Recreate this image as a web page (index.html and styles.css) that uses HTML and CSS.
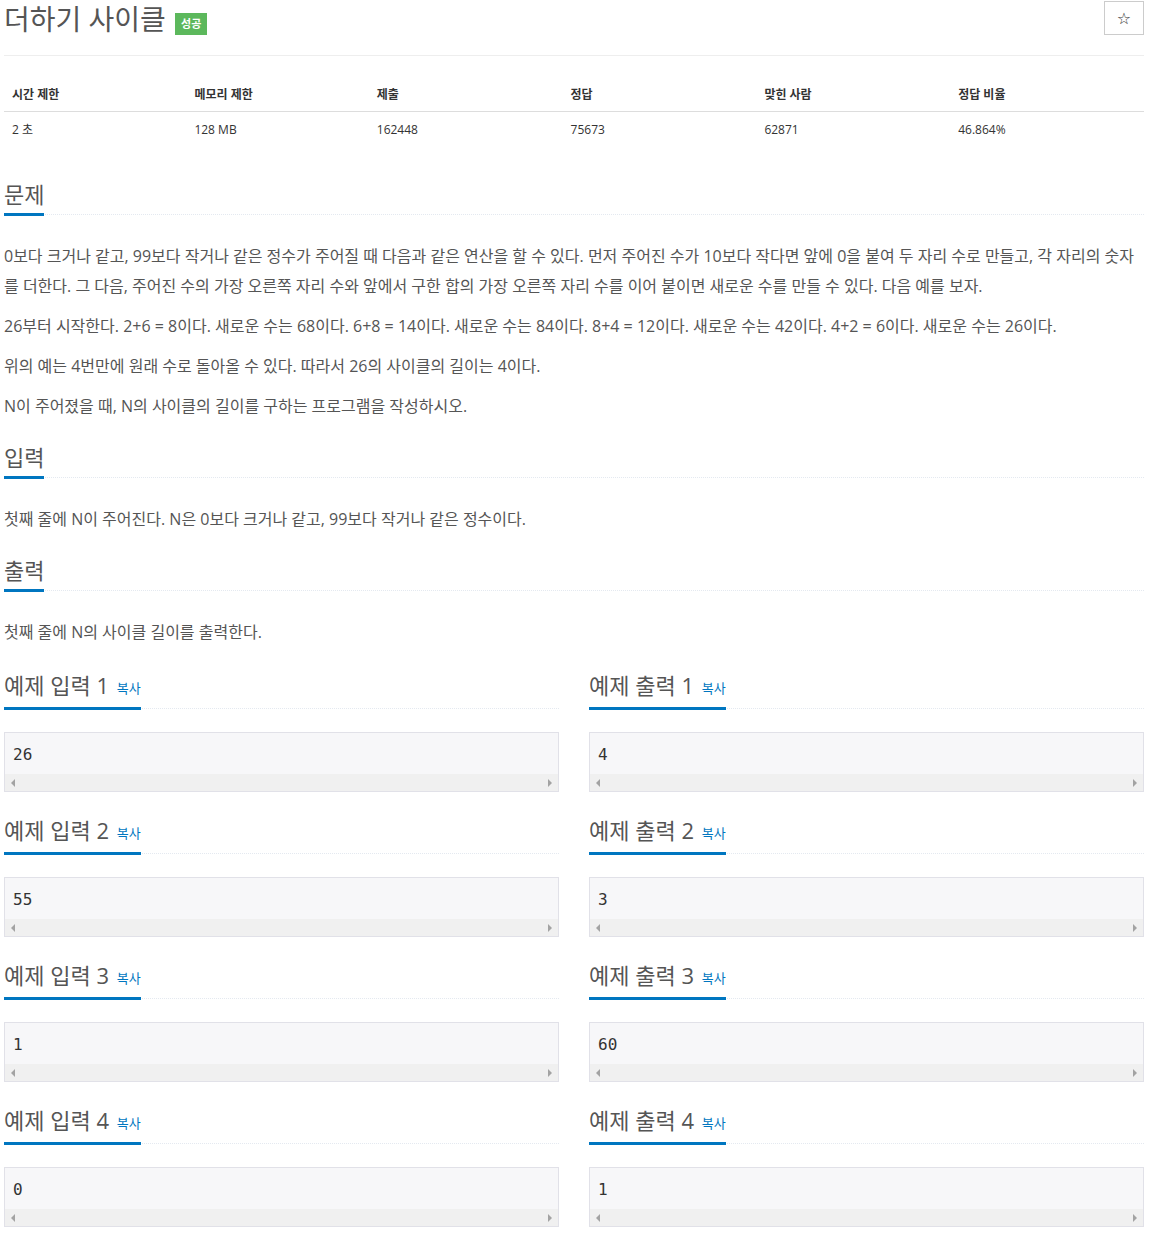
FILE: index.html
```html
<!DOCTYPE html>
<html lang="ko">
<head>
    <meta charset="UTF-8">
    <title>더하기 사이클</title>
    <link rel="stylesheet" href="styles.css">
</head>
<body>
    <div class="container">
        <div class="page-header">
            <h1 class="problem-title">더하기 사이클 <span class="label-success">성공</span></h1>
            <button type="button" class="star-btn">☆</button>
        </div>

        <table class="problem-info">
            <thead>
                <tr>
                    <th style="width: 16%">시간 제한</th>
                    <th style="width: 16%">메모리 제한</th>
                    <th style="width: 17%">제출</th>
                    <th style="width: 17%">정답</th>
                    <th style="width: 17%">맞힌 사람</th>
                    <th style="width: 17%">정답 비율</th>
                </tr>
            </thead>
            <tbody>
                <tr>
                    <td>2 초</td>
                    <td>128 MB</td>
                    <td>162448</td>
                    <td>75673</td>
                    <td>62871</td>
                    <td>46.864%</td>
                </tr>
            </tbody>
        </table>

        <section class="problem-section">
            <div class="headline"><h2>문제</h2></div>
            <div class="problem-text">
                <p>0보다 크거나 같고, 99보다 작거나 같은 정수가 주어질 때 다음과 같은 연산을 할 수 있다. 먼저 주어진 수가 10보다 작다면 앞에 0을 붙여 두 자리 수로 만들고, 각 자리의 숫자를 더한다. 그 다음, 주어진 수의 가장 오른쪽 자리 수와 앞에서 구한 합의 가장 오른쪽 자리 수를 이어 붙이면 새로운 수를 만들 수 있다. 다음 예를 보자.</p>
                <p>26부터 시작한다. 2+6 = 8이다. 새로운 수는 68이다. 6+8 = 14이다. 새로운 수는 84이다. 8+4 = 12이다. 새로운 수는 42이다. 4+2 = 6이다. 새로운 수는 26이다.</p>
                <p>위의 예는 4번만에 원래 수로 돌아올 수 있다. 따라서 26의 사이클의 길이는 4이다.</p>
                <p>N이 주어졌을 때, N의 사이클의 길이를 구하는 프로그램을 작성하시오.</p>
            </div>
        </section>

        <section class="problem-section">
            <div class="headline"><h2>입력</h2></div>
            <div class="problem-text">
                <p>첫째 줄에 N이 주어진다. N은 0보다 크거나 같고, 99보다 작거나 같은 정수이다.</p>
            </div>
        </section>

        <section class="problem-section">
            <div class="headline"><h2>출력</h2></div>
            <div class="problem-text">
                <p>첫째 줄에 N의 사이클 길이를 출력한다.</p>
            </div>
        </section>

        <div class="samples">
            <div class="sample">
                <div class="headline"><h2>예제 입력 1 <a class="copy-btn">복사</a></h2></div>
                <div class="sample-box"><pre>26</pre><div class="scrollbar"><span class="arrow-left"></span><span class="arrow-right"></span></div></div>
            </div>
            <div class="sample">
                <div class="headline"><h2>예제 출력 1 <a class="copy-btn">복사</a></h2></div>
                <div class="sample-box"><pre>4</pre><div class="scrollbar"><span class="arrow-left"></span><span class="arrow-right"></span></div></div>
            </div>
            <div class="sample">
                <div class="headline"><h2>예제 입력 2 <a class="copy-btn">복사</a></h2></div>
                <div class="sample-box"><pre>55</pre><div class="scrollbar"><span class="arrow-left"></span><span class="arrow-right"></span></div></div>
            </div>
            <div class="sample">
                <div class="headline"><h2>예제 출력 2 <a class="copy-btn">복사</a></h2></div>
                <div class="sample-box"><pre>3</pre><div class="scrollbar"><span class="arrow-left"></span><span class="arrow-right"></span></div></div>
            </div>
            <div class="sample">
                <div class="headline"><h2>예제 입력 3 <a class="copy-btn">복사</a></h2></div>
                <div class="sample-box"><pre>1</pre><div class="scrollbar"><span class="arrow-left"></span><span class="arrow-right"></span></div></div>
            </div>
            <div class="sample">
                <div class="headline"><h2>예제 출력 3 <a class="copy-btn">복사</a></h2></div>
                <div class="sample-box"><pre>60</pre><div class="scrollbar"><span class="arrow-left"></span><span class="arrow-right"></span></div></div>
            </div>
            <div class="sample">
                <div class="headline"><h2>예제 입력 4 <a class="copy-btn">복사</a></h2></div>
                <div class="sample-box"><pre>0</pre><div class="scrollbar"><span class="arrow-left"></span><span class="arrow-right"></span></div></div>
            </div>
            <div class="sample">
                <div class="headline"><h2>예제 출력 4 <a class="copy-btn">복사</a></h2></div>
                <div class="sample-box"><pre>1</pre><div class="scrollbar"><span class="arrow-left"></span><span class="arrow-right"></span></div></div>
            </div>
        </div>
    </div>
</body>
</html>
```

FILE: styles.css
```css
* {
    margin: 0;
    padding: 0;
    box-sizing: border-box;
}

body {
    font-family: 'Open Sans', 'Noto Sans CJK KR', sans-serif;
    color: #555;
    background: #fff;
}

.container {
    padding: 0 7px 0 4px;
}

.page-header {
    display: flex;
    justify-content: space-between;
    align-items: flex-start;
    border-bottom: 1px solid #eee;
    height: 56px;
}

.problem-title {
    font-size: 28px;
    font-weight: 400;
    line-height: 38px;
    color: #555;
}

.label-success {
    display: inline-block;
    vertical-align: 2px;
    background: #5cb85c;
    color: #fff;
    font-size: 11px;
    font-weight: 700;
    line-height: 14px;
    padding: 4px 6px;
    margin-left: 2px;
}

.star-btn {
    width: 40px;
    height: 34px;
    margin-top: 1px;
    border: 1px solid #ccc;
    background: #fff;
    color: #333;
    font-size: 16px;
    font-family: 'DejaVu Sans', sans-serif;
}

.problem-info {
    width: 100%;
    border-collapse: collapse;
    margin: 21px 0 29px;
    font-size: 12px;
    color: #333;
}

.problem-info th {
    text-align: left;
    font-weight: 700;
    padding: 8px 8px 6px;
    line-height: 20px;
    border-bottom: 1px solid #ddd;
}

.problem-info td {
    padding: 8px 8px 10px;
    line-height: 20px;
}

.problem-section {
    margin-top: 21px;
}

.headline {
    border-bottom: 1px dotted #e4e9f0;
    margin-bottom: 26px;
}

.headline h2 {
    display: inline-block;
    font-size: 22px;
    font-weight: 400;
    line-height: 30px;
    padding-bottom: 4px;
    margin-bottom: -2px;
    border-bottom: 3px solid #0076c0;
    color: #555;
}

.problem-text p {
    font-size: 16px;
    line-height: 30px;
    margin-bottom: 10px;
}

.copy-btn {
    font-size: 13px;
    color: #0076c0;
    vertical-align: 1px;
    margin-left: 2px;
}

.samples {
    display: grid;
    grid-template-columns: 1fr 1fr;
    column-gap: 30px;
    margin-top: 23px;
}

.sample {
    margin-bottom: 23px;
}

.sample .headline {
    margin-bottom: 23px;
}

.sample-box {
    border: 1px solid #e1e1e8;
    background: #f7f7f9;
}

.sample-box pre {
    font-family: 'DejaVu Sans Mono', monospace;
    font-size: 16px;
    line-height: 20px;
    padding: 12px 8px 9px;
    color: #333;
}

.scrollbar {
    height: 17px;
    background: #f0f0f0;
    display: flex;
    justify-content: space-between;
    align-items: center;
    padding: 0 6px;
}

.arrow-left {
    border-top: 4px solid transparent;
    border-bottom: 4px solid transparent;
    border-right: 4px solid #a3a3a3;
}

.arrow-right {
    border-top: 4px solid transparent;
    border-bottom: 4px solid transparent;
    border-left: 4px solid #a3a3a3;
}
```
